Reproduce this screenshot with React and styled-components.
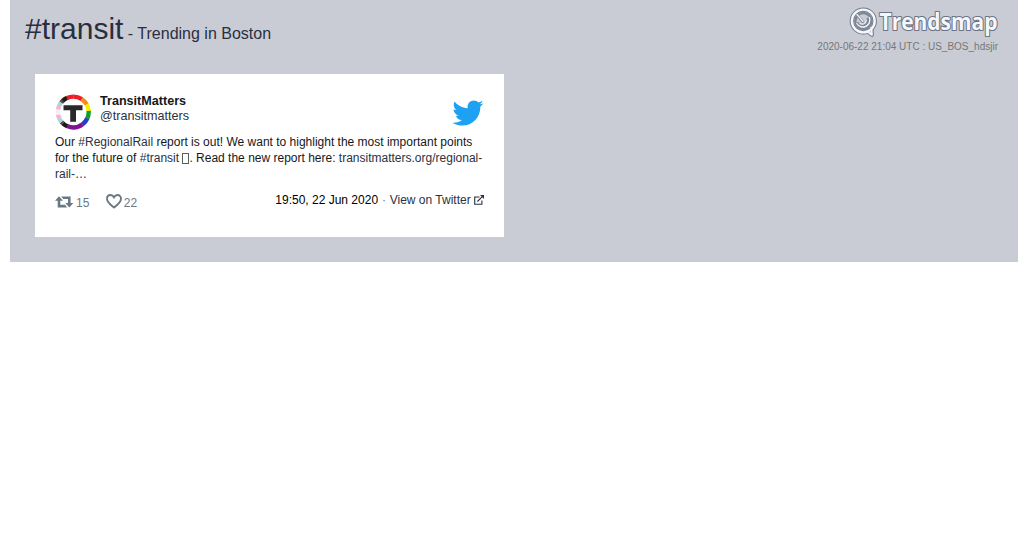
import React from 'react'
import styled, { createGlobalStyle } from 'styled-components'

const GlobalStyle = createGlobalStyle`

    body {
        margin: 0;
        background: #fff;
        font-family: "Liberation Sans", Arial, sans-serif;
        font-size: 12px;
        color: #14171a;
    }

`

const Panel = styled.main`

    box-sizing: border-box;
    height: 262px;
    margin: 0 10px;
    padding: 0 20px 0 15px;
    background: #caccd5;

`

const Header = styled.header`

    display: flex;
    justify-content: space-between;
    height: 74px;

`

const Title = styled.h1`

    margin: 0;
    padding-top: 11px;
    font-size: 30px;
    line-height: 36px;
    font-weight: 400;
    color: #292f3d;

`

const Subtitle = styled.span`

    font-size: 16px;

`

const Brand = styled.div`

    display: flex;
    flex-direction: column;
    align-items: flex-end;
    padding-top: 4px;

`

const LogoSvg = styled.svg`

    width: 156px;
    height: 37px;
    margin-right: -4px;
    overflow: visible;

`

const Stamp = styled.div`

    font-size: 10px;
    line-height: 12px;
    color: #777;

`

const Card = styled.article`

    box-sizing: border-box;
    width: 469px;
    height: 163px;
    margin-left: 10px;
    padding: 19px 20px;
    background: #fff;

`

const Author = styled.div`

    display: flex;
    height: 41px;

`

const Avatar = styled.div`

    box-sizing: border-box;
    width: 36px;
    height: 36px;
    margin: 1px 9px 0 0;

`

const Names = styled.div`

    flex: 1;
    font-size: 12.6px;
    line-height: 15px;

`

const Name = styled.div`

    padding-top: 1px;
    font-weight: 700;
    line-height: 14px;

`

const Handle = styled.div`

    padding-top: 1px;

`

const Link = styled.a`

    color: #2b3140;
    text-decoration: none;

`

const Bird = styled.svg`

    width: 35px;
    height: 35px;
    margin: 3px -1px 0 0;

`

const Message = styled.p`

    margin: 0;
    line-height: 16px;

`

/* the box shown for a character the font lacks */
const MissingGlyph = styled.span`

    display: inline-block;
    box-sizing: border-box;
    width: 7px;
    height: 11px;
    border: 1px solid #5b5d60;
    vertical-align: -2px;

`

const Footer = styled.footer`

    display: flex;
    align-items: flex-start;
    height: 26px;
    padding-top: 11px;
    color: #697882;

`

const Stat = styled.span`

    display: flex;
    align-items: flex-start;
    gap: 2px;
    margin-right: ${props => props.space || '0'};
    line-height: 20px;

    svg {
        margin-top: ${props => props.drop};
    }

`

const When = styled.span`

    margin-left: auto;
    line-height: 14px;
    color: #000;

`

const Dot = styled.span`

    margin: 0 0.5px;
    color: #697882;

`

const External = styled.svg`

    width: 10px;
    height: 10px;
    vertical-align: -1px;

`

const ring = [
    ['#ee1c25', 0, 33],
    ['#f68a1f', 33, 60],
    ['#fdee00', 60, 86],
    ['#0aa02c', 86, 114],
    ['#2440c8', 114, 143],
    ['#7d1593', 143, 203],
    ['#1b1b1b', 203, 222],
    ['#6b3f1f', 222, 230],
    ['#9ed8e8', 230, 244],
    ['#f3b3d3', 244, 260],
    ['#f4eef4', 260, 280],
    ['#f3b3cb', 280, 294],
    ['#9ed8e8', 294, 308],
    ['#6b3f1f', 308, 316],
    ['#1b1b1b', 316, 336],
    ['#ee1c25', 336, 360],
]

const AvatarImage = () => (
    <svg width="36" height="36" viewBox="0 0 36 36">
        {ring.map(([color, from, to]) => (
            <circle
                key={from}
                cx="18.3"
                cy="18"
                r="15.4"
                fill="none"
                stroke={color}
                strokeWidth="4.4"
                pathLength="360"
                strokeDasharray={`${to - from + 0.8} 360`}
                transform={`rotate(${from - 90} 18.3 18)`}/>
        ))}
        <path d="M8.5 11.3h19v5h-6.5v11.4h-5.8V16.3H8.5z" fill="#2a2829"/>
    </svg>
)

const Logo = () => (
    <LogoSvg viewBox="0 0 156 37">
        <g fill="none" strokeLinecap="round" strokeLinejoin="round">
            <path d="M22 28l4 3-.5-6" stroke="#7c8494" strokeWidth="4"/>
            <circle cx="17.3" cy="17" r="11.4" stroke="#747d8d" strokeWidth="4.4"/>
            <path d="M21.5 27.5l4.3 3.3-.5-7" stroke="#f4f7fc" strokeWidth="2"/>
            <circle cx="17.3" cy="17" r="11.4" stroke="#f4f7fc" strokeWidth="2.4"/>
            <circle cx="17.3" cy="17" r="8" stroke="#7e8797" strokeWidth="2.4"/>
            <path d="M11.5 11.5L17 18M12 19.5a5.8 5.8 0 0 0 10-4.5" stroke="#7e8797" strokeWidth="2.8"/>
            <path d="M11 10.5L17 17.5M10.8 19.5a7 7 0 0 0 12.6-6M14 19.5a4 4 0 0 0 6.2-3" stroke="#eef2f8" strokeWidth="1.3"/>
        </g>
        <text
            x="33.5"
            y="26"
            textLength="118"
            lengthAdjust="spacingAndGlyphs"
            fontFamily="Open Sans, sans-serif"
            fontSize="22.5"
            fontWeight="700"
            fill="#f4f7fc"
            stroke="#6b7484"
            strokeWidth="2.2"
            strokeLinejoin="round"
            paintOrder="stroke">
            Trendsmap
        </text>
    </LogoSvg>
)

const RetweetIcon = () => (
    <svg width="19" height="12" viewBox="0 0 19 12">
        <path
            d="M4 .2L8 4.8H5.3v4H10l2.2 2.6H2.7V4.8H0zM14.3 11.6l-4-4.6H13V3H8.3L6.1.4h9.5V7h2.7z"
            fill="#697882"/>
    </svg>
)

const HeartIcon = () => (
    <svg width="16" height="15" viewBox="0 0 16 15">
        <path
            d="M8 13.5C4.5 11 1 8 1 4.8 1 2.5 2.5 1 4.5 1 6.2 1 7.3 2 8 3.3 8.7 2 9.8 1 11.5 1 13.5 1 15 2.5 15 4.8 15 8 11.5 11 8 13.5z"
            fill="none"
            stroke="#697882"
            strokeWidth="1.9"/>
    </svg>
)

const ExternalIcon = () => (
    <External viewBox="0 0 10 10">
        <path d="M5.5 2H.7v7.3h7.2V5.5M3.4 6.5L8.6 1.3" fill="none" stroke="#2b3140" strokeWidth="1.1"/>
        <path d="M6 0h4v4z" fill="#2b3140"/>
    </External>
)

const App = () => (
    <>
        <GlobalStyle/>
        <Panel>
            <Header>
                <Title>#transit<Subtitle> - Trending in Boston</Subtitle></Title>
                <Brand>
                    <Logo/>
                    <Stamp>2020-06-22 21:04 UTC : US_BOS_hdsjir</Stamp>
                </Brand>
            </Header>

            <Card>
                <Author>
                    <Avatar><AvatarImage/></Avatar>
                    <Names>
                        <Name>TransitMatters</Name>
                        <Handle><Link>@transitmatters</Link></Handle>
                    </Names>
                    <Bird viewBox="0 0 72 72">
                        <path
                            fill="#1da1f2"
                            d="M68.812 15.14c-2.348 1.04-4.87 1.744-7.52 2.06 2.704-1.62 4.78-4.186 5.757-7.243-2.53 1.5-5.33 2.592-8.314 3.176C56.35 10.59 52.948 9 49.182 9c-7.23 0-13.092 5.86-13.092 13.093 0 1.026.118 2.02.338 2.98C25.543 24.527 15.9 19.318 9.44 11.396c-1.125 1.936-1.77 4.184-1.77 6.58 0 4.543 2.312 8.552 5.824 10.9-2.146-.07-4.165-.658-5.93-1.64-.002.056-.002.11-.002.163 0 6.345 4.513 11.638 10.504 12.84-1.1.298-2.256.457-3.45.457-.845 0-1.666-.078-2.464-.23 1.667 5.2 6.5 8.985 12.23 9.09-4.482 3.51-10.13 5.605-16.26 5.605-1.055 0-2.096-.06-3.122-.184 5.794 3.717 12.676 5.882 20.067 5.882 24.083 0 37.25-19.95 37.25-37.25 0-.565-.013-1.133-.038-1.693 2.558-1.847 4.778-4.15 6.532-6.774z"/>
                    </Bird>
                </Author>

                <Message>
                    Our <Link>#RegionalRail</Link> report is out! We want to highlight the most important points for
                    the future of <Link>#transit</Link> <MissingGlyph/>. Read the new report
                    here: <Link>transitmatters.org/regional-rail-…</Link>
                </Message>

                <Footer>
                    <Stat space="16.5px" drop="3px"><RetweetIcon/>15</Stat>
                    <Stat drop="1px"><HeartIcon/>22</Stat>
                    <When>
                        19:50, 22 Jun 2020 <Dot>·</Dot> <Link>View on Twitter <ExternalIcon/></Link>
                    </When>
                </Footer>
            </Card>
        </Panel>
    </>
)

export default App
